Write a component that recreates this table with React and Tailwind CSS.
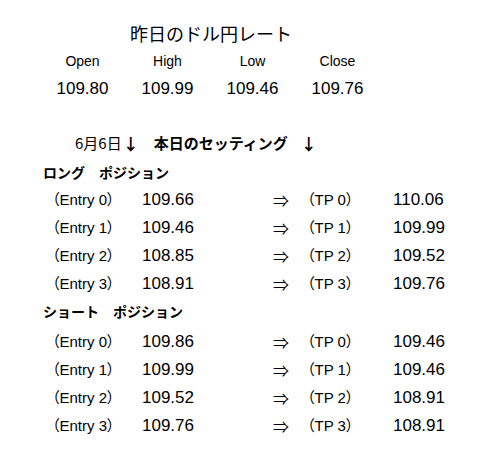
import React from "react";

const jp = "font-['Noto_Sans_CJK_JP',sans-serif]";
const num = "font-['Liberation_Sans','Noto_Sans_CJK_JP',sans-serif]";

const yesterday = [
  { label: "Open", value: "109.80" },
  { label: "High", value: "109.99" },
  { label: "Low", value: "109.46" },
  { label: "Close", value: "109.76" },
];

const longRows = [
  ["109.66", "110.06"],
  ["109.46", "109.99"],
  ["108.85", "109.52"],
  ["108.91", "109.76"],
];

const shortRows = [
  ["109.86", "109.46"],
  ["109.99", "109.46"],
  ["109.52", "108.91"],
  ["109.76", "108.91"],
];

function SettingRow({ i, entry, tp }) {
  return (
    <div className="flex h-[28px] items-center text-black">
      <span
        className={`${num} w-[90px] pl-[52px] box-content text-[15px] [font-feature-settings:'palt']`}
      >
        （Entry {i}）
      </span>
      <span className={`${num} w-[131px] text-[17px]`}>{entry}</span>
      <span className={`${jp} w-[34px] text-[16px]`}>⇒</span>
      <span
        className={`${num} w-[86px] text-[15px] [font-feature-settings:'palt']`}
      >
        （TP {i}）
      </span>
      <span className={`${num} text-[17px]`}>{tp}</span>
    </div>
  );
}

export default function App() {
  return (
    <div className="h-[450px] w-[500px] bg-white text-black">
      {/* yesterday's rate */}
      <div className={`${jp} mt-[19px] flex h-[28px] items-center pl-[130px] text-[18px]`}>
        昨日のドル円レート
      </div>
      <div className="flex h-[28px] items-center pl-[40px]">
        {yesterday.map((d) => (
          <span key={d.label} className={`${num} w-[85px] text-center text-[14px]`}>
            {d.label}
          </span>
        ))}
      </div>
      <div className="flex h-[28px] items-center pl-[40px]">
        {yesterday.map((d) => (
          <span key={d.label} className={`${num} w-[85px] text-center text-[17px]`}>
            {d.value}
          </span>
        ))}
      </div>

      {/* today's setting */}
      <div className={`${jp} mt-[26px] flex h-[28px] items-center pl-[75px]`}>
        <span className="text-[15px]">6月6日</span>
        <span className="ml-[1px] text-[16px] font-bold">↓</span>
        <span className="ml-[15px] text-[15px] font-bold">本日のセッティング</span>
        <span className="ml-[13px] text-[16px] font-bold">↓</span>
      </div>

      <div className={`${jp} mt-[1px] flex h-[28px] items-center pl-[43px] text-[14px] font-bold`}>
        ロング　ポジション
      </div>
      {longRows.map(([e, t], i) => (
        <SettingRow key={i} i={i} entry={e} tp={t} />
      ))}

      <div className={`${jp} flex h-[26px] items-center pl-[43px] text-[14px] font-bold`}>
        ショート　ポジション
      </div>
      <div className="mt-[4px]">
        {shortRows.map(([e, t], i) => (
          <SettingRow key={i} i={i} entry={e} tp={t} />
        ))}
      </div>
    </div>
  );
}
